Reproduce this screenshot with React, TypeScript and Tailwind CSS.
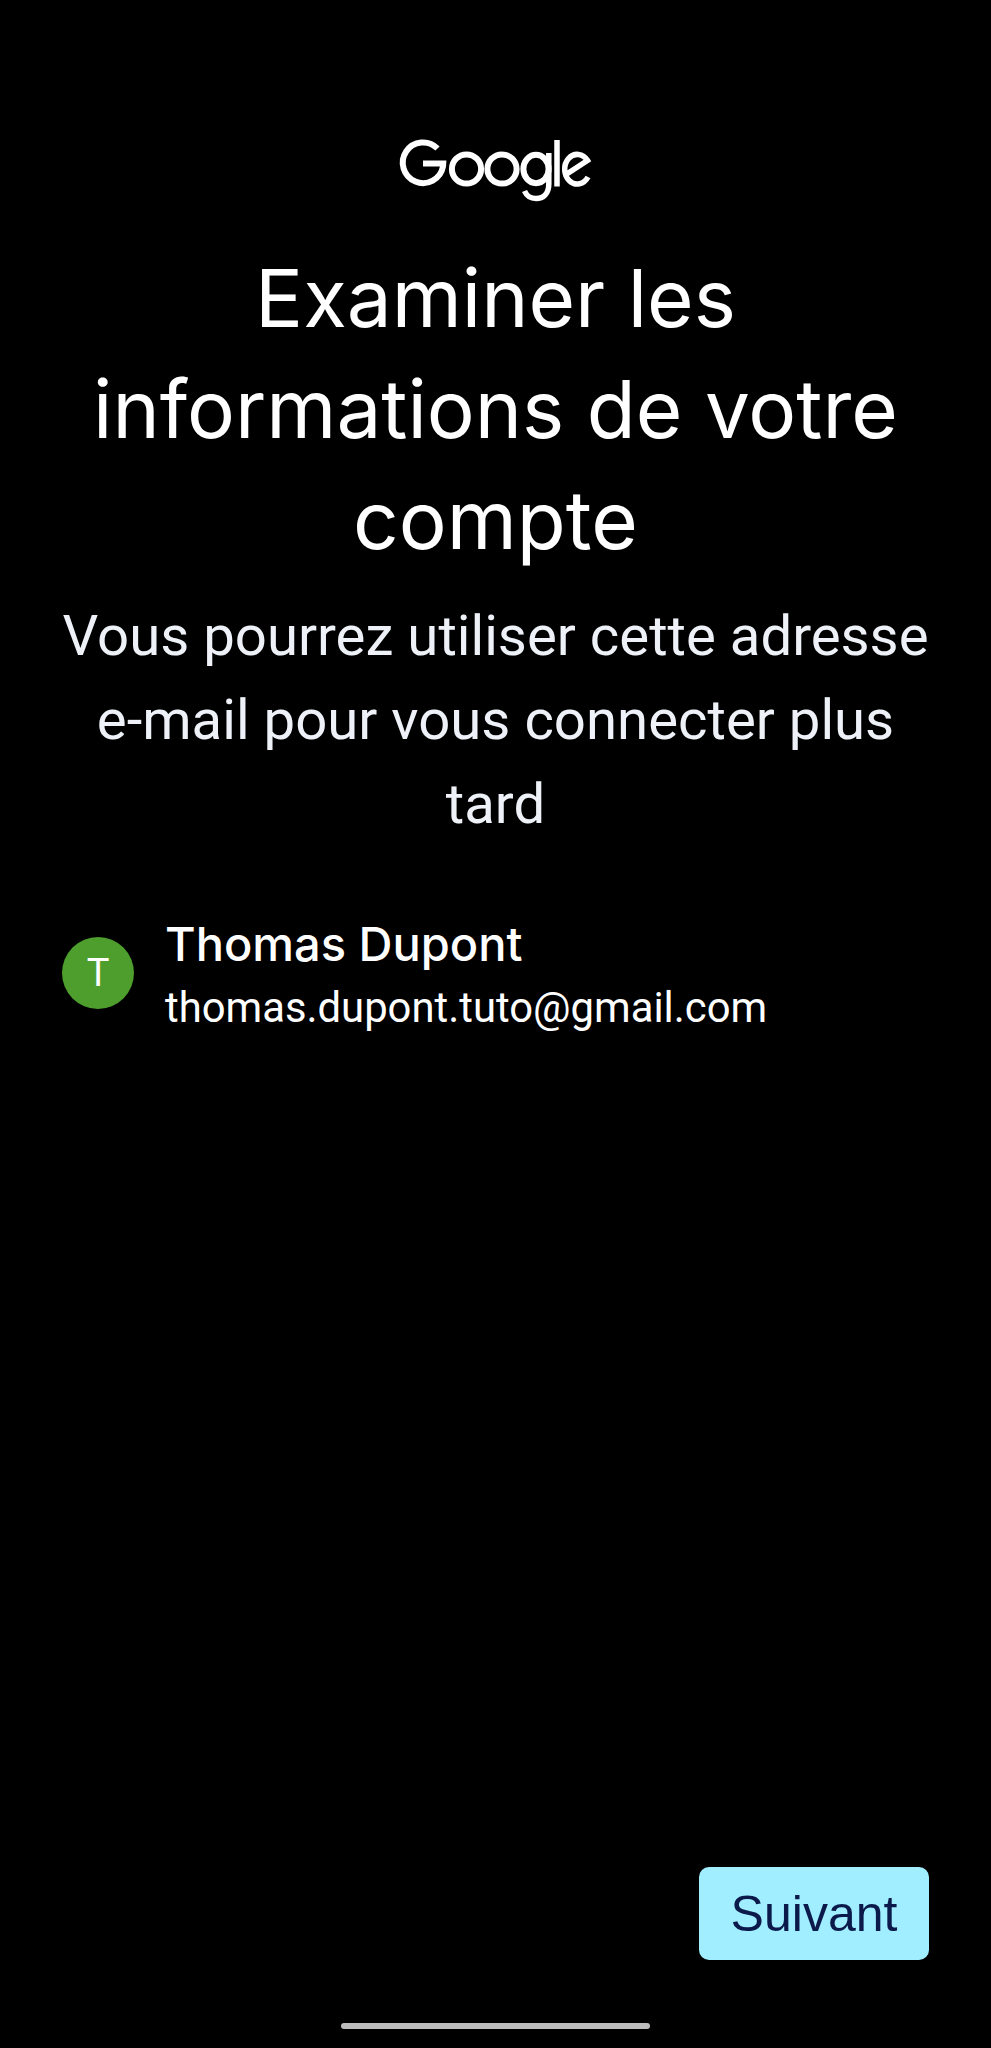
import React from 'react';

const GoogleLogo = () => (
  <svg
    viewBox="0 0 200 70"
    className="h-[70px] w-[200px]"
    fill="none"
    stroke="white"
    strokeWidth={6}
    role="img"
    aria-label="Google"
  >
    <path d="M41.5 13.5A20.3 20.3 0 1 0 47 31.5L47.2 28.5H27" />
    <circle cx="70.5" cy="34" r="14.6" />
    <circle cx="106" cy="34" r="14.6" />
    <ellipse cx="140" cy="34" rx="12.6" ry="14.2" />
    <path d="M152.8 18V49C152.8 59 147 63.5 140 63.5C134.5 63.5 130.5 60.5 128.5 56" strokeWidth={5.5} />
    <path d="M161 5V51.5" strokeWidth={5.5} />
    <path d="M192 42A12.6 14.8 0 1 1 191.5 25.5L170 39.5" strokeWidth={5.5} />
  </svg>
);

const App = () => {
  return (
    <div className="h-[2048px] w-[991px] bg-black flex flex-col items-center overflow-hidden text-white font-['Roboto',sans-serif]">
      <div className="pt-[135px]">
        <GoogleLogo />
      </div>

      <h1 className="mt-[37px] w-[860px] text-center text-[80px] leading-[111px] font-normal font-['Inter',sans-serif]">
        Examiner les informations de votre compte
      </h1>

      <p className="mt-[19px] w-[900px] text-center text-[56.3px] leading-[84px] text-[#eef2f8]">
        Vous pourrez utiliser cette adresse e-mail pour vous connecter plus tard
      </p>

      <div className="mt-[66px] w-full pl-[62px] flex items-start gap-[31px]">
        <div className="mt-[25px] w-[72px] h-[72px] rounded-full bg-[#4e9e2e] flex items-center justify-center text-[38px]">
          T
        </div>
        <div className="flex flex-col">
          <span className="text-[47px] leading-[64px] font-medium font-['Inter',sans-serif]">
            Thomas Dupont
          </span>
          <span className="text-[41.8px] leading-[64px]">thomas.dupont.tuto@gmail.com</span>
        </div>
      </div>

      <div className="mt-auto w-full flex justify-end pr-[62px]">
        <button className="w-[230px] h-[93px] rounded-[10px] bg-[#a0eeff] text-[#0b1a4a] text-[50px] pt-[1px] font-['Liberation_Sans',sans-serif]">
          Suivant
        </button>
      </div>

      <div className="mt-[63px] mb-[19px] w-[309px] h-[6px] rounded-full bg-[#bdbdbd]" />
    </div>
  );
};

export default App;
